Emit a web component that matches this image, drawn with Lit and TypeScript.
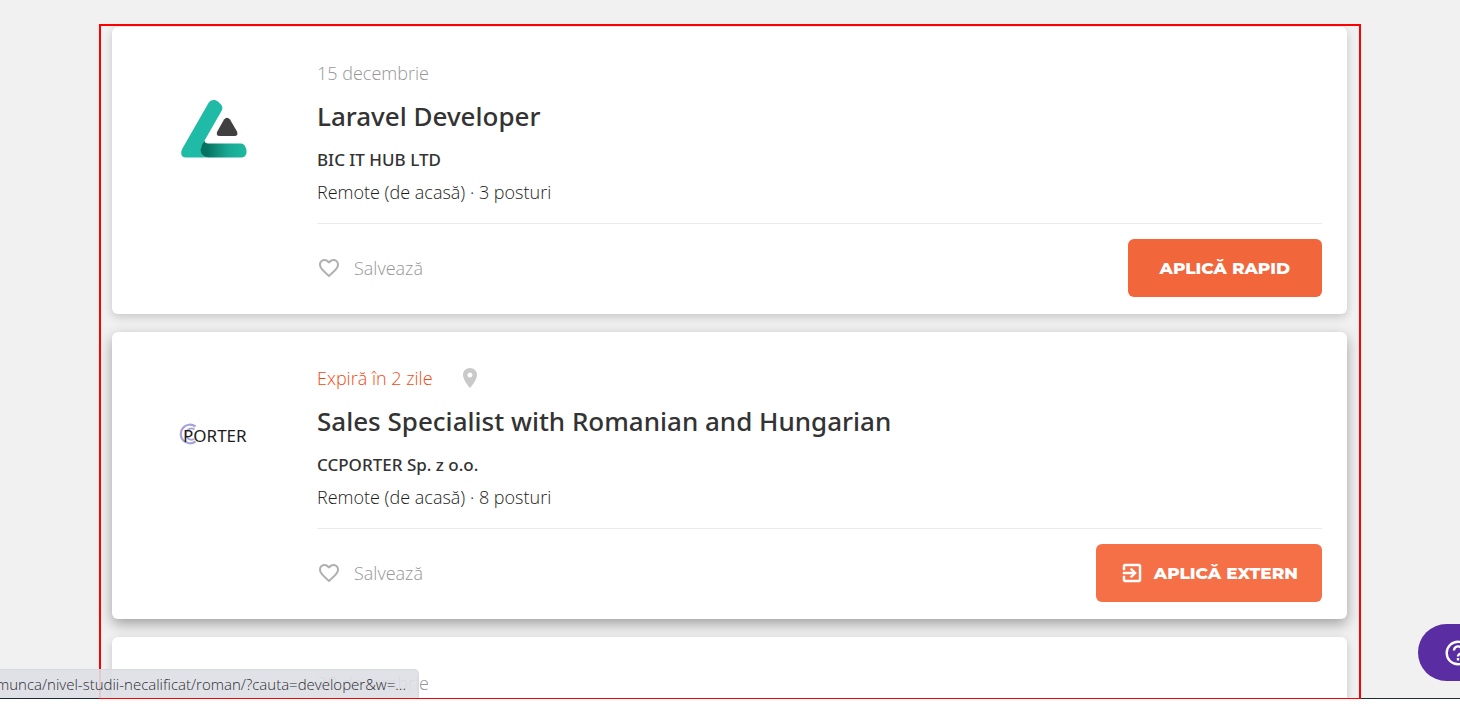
import { LitElement, html, css, nothing } from "lit";
import { customElement, property } from "lit/decorators.js";

interface Job {
  logo: "delta" | "porter" | "none";
  date: string;
  expiring?: boolean;
  title: string;
  company: string;
  place: string;
  action: string;
  external?: boolean;
  raised?: boolean;
}

const jobs: Job[] = [
  { logo: "delta", date: "15 decembrie", title: "Laravel Developer", company: "BIC IT HUB LTD", place: "Remote (de acasă) · 3 posturi", action: "APLICĂ RAPID" },
  { logo: "porter", date: "Expiră în 2 zile", expiring: true, title: "Sales Specialist with Romanian and Hungarian", company: "CCPORTER Sp. z o.o.", place: "Remote (de acasă) · 8 posturi", action: "APLICĂ EXTERN", external: true, raised: true },
  { logo: "none", date: "20 decembrie", title: "", company: "", place: "", action: "" },
];

const deltaLogo = html`<svg width="68" height="60" viewBox="0 0 68 60" role="img" aria-label="BIC IT HUB">
  <defs>
    <linearGradient id="foot" x1="0" x2="1" y1="0" y2="0">
      <stop offset="0" stop-color="#04705f" /><stop offset=".15" stop-color="#067464" />
      <stop offset=".6" stop-color="#1aa993" /><stop offset="1" stop-color="#1fb9a2" />
    </linearGradient>
  </defs>
  <path d="M28.500 4C30.500 .5 35 0 38 2.500L41 5.500Q43.500 8.500 41.500 12L24 42.500Q20.500 49 21 52Q22 57 27 58.500H6Q1 58.500 1.200 53.500Q1.300 51 3 48.500Z" fill="#1fbba6" />
  <path d="M24.500 41.500Q24.500 44.500 28.500 44.500H61Q64 44.500 65.500 48Q67 51 66.500 54Q65.500 58.500 61 58.500H28Q21 57.500 20.500 51Q21 46 24.500 41.500Z" fill="url(#foot)" />
  <path d="M44 20.500Q47 17 50 20.500L57 32.500Q58.500 37 54.500 37H39.500Q36 37 37 33Z" fill="#404040" />
</svg>`;

const porterLogo = html`<svg width="70" height="24" viewBox="0 0 70 24" role="img" aria-label="PORTER">
  <g fill="none" stroke="#a5a2da">
    <path d="M16.500 4.500A9.300 9.300 0 1 0 16.500 19.500" stroke-width="2.200" />
    <path d="M15.500 7.500A5.500 5.500 0 1 0 15 17" stroke-width="1.800" />
  </g>
  <text x="4" y="20" font-family="Noto Sans, sans-serif" font-size="17" fill="#1c1c1c">PORTER</text>
</svg>`;

const heart = html`<svg width="24" height="24" viewBox="0 0 24 24" fill="currentColor" aria-hidden="true"><path d="M16.500 3c-1.740 0-3.410.81-4.500 2.090C10.910 3.810 9.240 3 7.500 3 4.420 3 2 5.420 2 8.500c0 3.780 3.400 6.860 8.550 11.540L12 21.350l1.450-1.320C18.600 15.360 22 12.280 22 8.500 22 5.420 19.580 3 16.500 3zm-4.400 15.550l-.1.100-.1-.1C7.140 14.240 4 11.390 4 8.500 4 6.500 5.500 5 7.500 5c1.540 0 3.040.99 3.570 2.360h1.870C13.460 5.990 14.960 5 16.500 5c2 0 3.500 1.500 3.500 3.500 0 2.890-3.140 5.740-7.900 10.050z"/></svg>`;

const pin = html`<svg class="pin" width="24" height="24" viewBox="0 0 24 24" fill="currentColor" aria-hidden="true"><path d="M12 2C8.130 2 5 5.130 5 9c0 5.250 7 13 7 13s7-7.750 7-13c0-3.870-3.130-7-7-7zm0 9.500a2.500 2.500 0 1 1 0-5 2.500 2.500 0 0 1 0 5z"/></svg>`;

const exit = html`<svg width="24" height="24" viewBox="0 0 24 24" fill="currentColor" stroke="currentColor" stroke-width=".5" aria-hidden="true"><path d="M10.090 15.590L11.500 17l5-5-5-5-1.410 1.410L12.670 11H3v2h9.670l-2.580 2.590zM19 3H5a2 2 0 0 0-2 2v4h2V5h14v14H5v-4H3v4c0 1.100.89 2 2 2h14c1.100 0 2-.9 2-2V5c0-1.100-.9-2-2-2z"/></svg>`;

@customElement("job-card")
export class JobCard extends LitElement {
  @property({ attribute: false }) job!: Job;

  static styles = css`
    :host { display: block; }
    .card {
      display: grid;
      grid-template-columns: 205px 1fr;
      min-height: 287px;
      box-sizing: border-box;
      padding: 34px 25px 16px 0;
      border-radius: 6px;
      background: #fff;
      box-shadow: 0 3px 10px rgba(0, 0, 0, 0.18);
    }
    .raised { box-shadow: 0 5px 14px rgba(0, 0, 0, 0.34); }
    .logo { display: flex; justify-content: center; height: 136px; align-items: center; padding-right: 2px; }
    .date { display: flex; align-items: center; gap: 25px; height: 24px; color: #969696; font-weight: 300; }
    .expiring { color: #f04a12; }
    .pin { color: #c9c9c9; }
    h2 { margin: 13px 0; font-family: "Noto Sans", "Open Sans", sans-serif; font-size: 26px; line-height: 36px; font-weight: 500; color: #333; }
    p { margin: 0; line-height: 26px; color: #1c1c1c; font-weight: 300; }
    .company { margin-bottom: 6px; font-family: "Noto Sans", "Open Sans", sans-serif; font-size: 17px; font-weight: 500; color: #333; }
    .actions { display: flex; justify-content: space-between; align-items: center; margin-top: 18px; padding-top: 15px; border-top: 1px solid #ebebeb; }
    button { display: flex; align-items: center; border: 0; font: inherit; cursor: pointer; }
    .save { gap: 13px; padding: 0; background: none; color: #969696; font-weight: 300; }
    .save svg { color: #b0b0b0; }
    .apply { gap: 10px; height: 58px; padding: 0 32px; border-radius: 6px; background: #f2663c; color: #fff; font-family: Montserrat, Inter, sans-serif; font-size: 17px; font-weight: 800; }
    .external { padding: 0 24px; background: #f56f47; }
  `;

  render() {
    const j = this.job;
    return html`<article class="card ${j.raised ? "raised" : ""}">
      <div class="logo">${j.logo === "delta" ? deltaLogo : j.logo === "porter" ? porterLogo : nothing}</div>
      <div>
        <div class="date ${j.expiring ? "expiring" : ""}"><span>${j.date}</span>${j.expiring ? pin : nothing}</div>
        ${j.title
          ? html`<h2>${j.title}</h2>
              <p class="company">${j.company}</p>
              <p>${j.place}</p>
              <div class="actions">
                <button class="save" type="button">${heart}<span>Salvează</span></button>
                <button class="apply ${j.external ? "external" : ""}" type="button">${j.external ? exit : nothing}<span>${j.action}</span></button>
              </div>`
          : nothing}
      </div>
    </article>`;
  }
}

@customElement("app-root")
export class AppRoot extends LitElement {
  static styles = css`
    :host { display: block; height: 100vh; box-sizing: border-box; padding-bottom: 25px; overflow: hidden; background: #fff; font: 18px "Open Sans", sans-serif; }
    .screen { position: relative; z-index: 0; height: 100%; box-sizing: border-box; padding: 24px 99px 0; overflow: hidden; background: #f1f1f1; }
    .screen::after { content: ""; position: absolute; z-index: -1; inset: auto 0 0; height: 1px; background: #1d2b35; }
    .list { display: flex; flex-direction: column; gap: 18px; height: 100%; box-sizing: border-box; padding: 1px 12px 0 11px; overflow: hidden; border: 2px solid #f00; border-bottom-width: 1px; }
    .list > * { flex: none; }
    .status { position: absolute; left: 0; bottom: 1px; display: flex; justify-content: flex-end; width: 419px; height: 29px; box-sizing: border-box; padding-right: 12px; overflow: hidden; border: solid #d8d9dd; border-width: 1px 1px 0 0; border-radius: 0 5px 0 0; background: rgba(222, 223, 229, 0.9); color: #2c2d32; font-size: 15px; font-weight: 300; line-height: 28px; white-space: nowrap; }
    .help { position: absolute; right: 0; bottom: 18px; width: 42px; height: 57px; padding: 0 0 0 26px; display: flex; align-items: center; overflow: hidden; border: 0; border-radius: 29px 0 0 29px; background: #5b2da3; color: #fff; }
    .help svg { flex: none; }
  `;

  render() {
    return html`<main class="screen">
      <section class="list">${jobs.map((job) => html`<job-card .job=${job}></job-card>`)}</section>
      <div class="status">munca/nivel-studii-necalificat/roman/?cauta=developer&amp;w=...</div>
      <button class="help" type="button" aria-label="Ajutor">
        <svg width="28" height="28" viewBox="0 0 28 28" fill="none" stroke="currentColor" stroke-width="2.400" aria-hidden="true">
          <circle cx="14" cy="14" r="11.300" /><path d="M10 11.500A4 4 0 1 1 16.500 14.500Q14 15.500 14 17.500M14 19v2.500" />
        </svg>
      </button>
    </main>`;
  }
}
